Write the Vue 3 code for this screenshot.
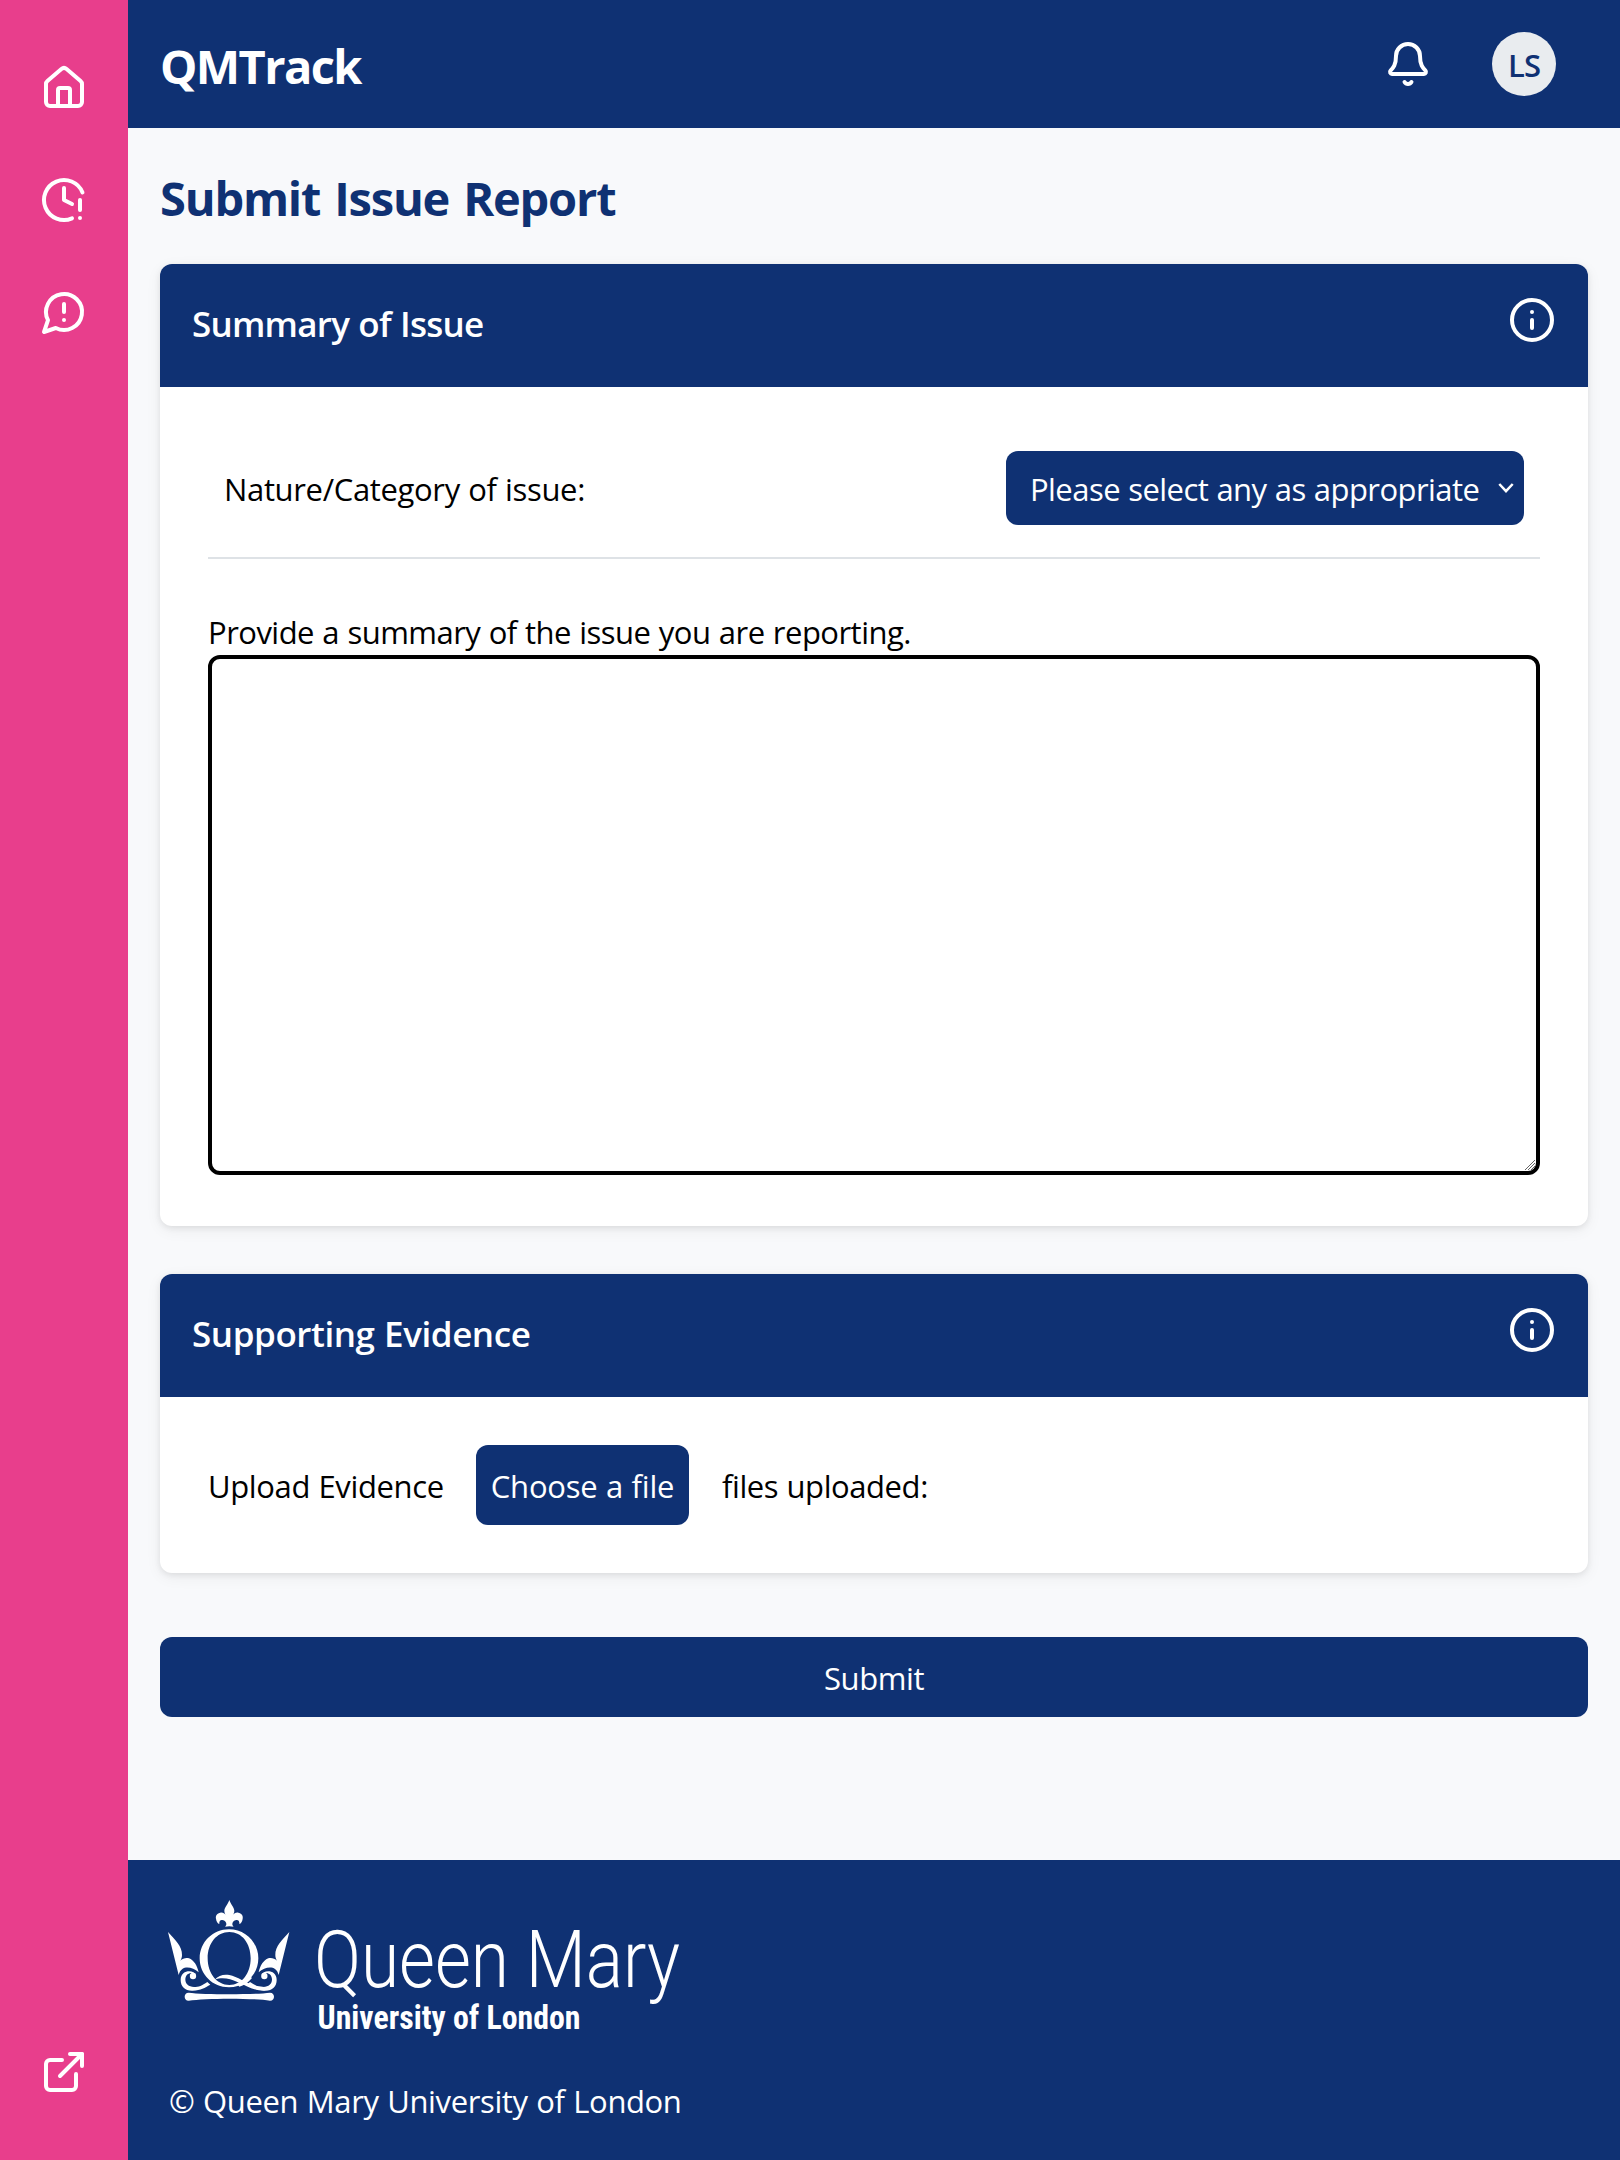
<script setup>
const navIcons = [
  {
    label: 'Home',
    paths: [
      'M15 21v-8a1 1 0 0 0-1-1h-4a1 1 0 0 0-1 1v8',
      'M3 10a2 2 0 0 1 .709-1.528l7-5.999a2 2 0 0 1 2.582 0l7 5.999A2 2 0 0 1 21 10v9a2 2 0 0 1-2 2H5a2 2 0 0 1-2-2z',
    ],
  },
  {
    label: 'Extenuating circumstances',
    paths: ['M12 6v6l4 2', 'M20 12v5', 'M20 21h.01', 'M21.25 8.2A10 10 0 1 0 16 21.16'],
  },
  {
    label: 'Report an issue',
    paths: ['M7.9 20A9 9 0 1 0 4 16.1L2 22Z', 'M12 8v4', 'M12 16h.01'],
  },
]
</script>

<template>
  <div class="app">
    <nav class="sidebar">
      <div class="nav-top">
        <a v-for="item in navIcons" :key="item.label" :aria-label="item.label">
          <svg class="icon" viewBox="0 0 24 24">
            <path v-for="d in item.paths" :key="d" :d="d" />
          </svg>
        </a>
      </div>
      <a aria-label="Open external site">
        <svg class="icon" viewBox="0 0 24 24">
          <path d="M15 3h6v6" />
          <path d="M10 14 21 3" />
          <path d="M18 13v6a2 2 0 0 1-2 2H5a2 2 0 0 1-2-2V8a2 2 0 0 1 2-2h6" />
        </svg>
      </a>
    </nav>

    <div class="page">
      <header class="topbar">
        <div class="brand">QMTrack</div>
        <div class="actions">
          <svg class="icon" viewBox="0 0 24 24">
            <path d="M10.268 21a2 2 0 0 0 3.464 0" />
            <path d="M3.262 15.326A1 1 0 0 0 4 17h16a1 1 0 0 0 .74-1.673C19.41 13.956 18 12.499 18 8A6 6 0 0 0 6 8c0 4.499-1.411 5.956-2.738 7.326" />
          </svg>
          <div class="avatar">LS</div>
        </div>
      </header>

      <main>
        <h1>Submit Issue Report</h1>

        <section class="card">
          <div class="card-head">
            <h2 class="summary-title">Summary of Issue</h2>
            <svg class="icon" viewBox="0 0 24 24">
              <circle cx="12" cy="12" r="10" />
              <path d="M12 16v-4" />
              <path d="M12 8h.01" />
            </svg>
          </div>
          <div class="summary-body">
            <div class="category-row">
              <span class="category-label">Nature/Category of issue:</span>
              <div class="select">
                <span>Please select any as appropriate</span>
                <svg class="chevron" viewBox="0 0 16 10"><path d="M1.3 1 8 8.2 14.7 1" /></svg>
              </div>
            </div>
            <label class="summary-label" for="summary">Provide a summary of the issue you are reporting.</label>
            <div class="textarea-wrap">
              <textarea id="summary"></textarea>
              <svg class="grip" viewBox="0 0 10 10"><path d="M0 10 10 0M3 10 10 3M6 10 10 6" /></svg>
            </div>
          </div>
        </section>

        <section class="card evidence">
          <div class="card-head">
            <h2 class="evidence-title">Supporting Evidence</h2>
            <svg class="icon" viewBox="0 0 24 24">
              <circle cx="12" cy="12" r="10" />
              <path d="M12 16v-4" />
              <path d="M12 8h.01" />
            </svg>
          </div>
          <div class="evidence-body">
            <span class="upload-label">Upload Evidence</span>
            <button class="choose">Choose a file</button>
            <span class="files-label">files uploaded:</span>
          </div>
        </section>

        <button class="submit">Submit</button>
      </main>

      <footer>
        <svg class="logo" viewBox="0 0 540 150" width="540" height="150">
          <g transform="scale(.333333)">
            <path d="M238 60C233 75 223 82 223 93C223 99 227 105 230 110C226 101 219 97 211 98C202 99 196 107 198 116C199 125 203 130 208 132C207 124 211 119 217 120C225 121 229 127 229 132C229 136 227 138 225 140Q238 137 251 140C249 138 247 136 247 132C247 127 251 121 259 120C265 119 269 124 268 132C273 130 277 125 278 116C280 107 274 99 265 98C257 97 250 101 246 110C249 105 253 99 253 93C253 82 243 75 238 60Z" />
            <path fill-rule="evenodd" d="M237 148C286 148 325 187 325 235C325 284 286 322 237 322C188 322 149 284 149 235C149 187 188 148 237 148ZM238 156C200 156 173 190 173 235C173 280 200 315 238 315C276 315 302 280 302 235C302 190 276 156 238 156Z" />
            <g v-for="side in ['translate(0 0)', 'translate(472 0) scale(-1 1)']" :key="side" :transform="side">
              <path d="M54 156C74 178 97 198 96 225C96 232 94 237 91 242C98 235 109 232 117 235C131 240 142 257 146 277C131 263 109 258 97 267C91 271 88 277 86 285Z" />
              <circle cx="129" cy="288" r="9.500" />
              <path d="M137 283C133 270 92 266 92 300C92 320 106 333 128 332C153 331 164 323 181 314L172 306C156 317 146 321 132 321C116 321 106 312 106 298C106 279 126 274 137 283Z" />
            </g>
            <path d="M194 299C206 287 219 282 238 285C268 290 300 321 343 321L344 332C309 332 290 317 262 306C241 297 219 290 194 299Z" />
            <path d="M262 313C276 306 287 297 296 285L306 294C294 309 281 317 268 320Z" />
            <path d="M116 338C160 344 316 344 360 338C376 338 376 362 360 362C310 354 166 354 116 362C100 362 100 338 116 338Z" />
          </g>
          <text class="logo-name" x="164" y="107" textLength="366" lengthAdjust="spacingAndGlyphs">Queen Mary</text>
          <text class="logo-sub" x="167.500" y="149" textLength="263" lengthAdjust="spacingAndGlyphs">University of London</text>
        </svg>
        <p>© Queen Mary University of London</p>
      </footer>
    </div>
  </div>
</template>

<style>
body {
  background: #f8f9fb;
}
</style>

<style scoped>
* {
  box-sizing: border-box;
  margin: 0;
}

.app {
  --navy: #0f3173;
  display: flex;
  height: 2160px;
  font: 31px/44px 'Open Sans', 'Noto Sans', sans-serif;
  color: #000;
  background: #f8f9fb;
}

.icon {
  display: block;
  width: 48px;
  height: 48px;
  flex: none;
  fill: none;
  stroke: #fff;
  stroke-width: 2;
  stroke-linecap: round;
  stroke-linejoin: round;
}

.sidebar {
  width: 128px;
  flex: none;
  display: flex;
  flex-direction: column;
  justify-content: space-between;
  align-items: center;
  padding: 64px 0;
  background: #e83e8c;
}

.nav-top {
  display: flex;
  flex-direction: column;
  gap: 64px;
}

.page {
  flex: 1;
  display: flex;
  flex-direction: column;
}

.topbar {
  height: 128px;
  flex: none;
  display: flex;
  align-items: center;
  justify-content: space-between;
  padding: 0 64px 0 32px;
  background: var(--navy);
  color: #fff;
}

.brand {
  padding-top: 4px;
  font-size: 47px;
  font-weight: 700;
  line-height: 64px;
  letter-spacing: -1.6px;
}

.actions {
  display: flex;
  align-items: center;
  gap: 60px;
}

.avatar {
  width: 64px;
  height: 64px;
  border-radius: 50%;
  background: #e9ecef;
  color: var(--navy);
  font-weight: 600;
  line-height: 66px;
  letter-spacing: -1px;
  text-align: center;
}

main {
  flex: 1;
  padding: 32px 32px 0;
}

h1 {
  margin: 0 0 28px;
  color: var(--navy);
  font-size: 47px;
  font-weight: 700;
  line-height: 76px;
  letter-spacing: -1.2px;
  word-spacing: 3px;
}

.card {
  background: #fff;
  border-radius: 12px;
  box-shadow: 0 2px 6px rgba(0, 0, 0, 0.08), 0 4px 16px rgba(0, 0, 0, 0.06);
}

.card-head {
  height: 123px;
  display: flex;
  justify-content: space-between;
  padding: 32px;
  border-radius: 12px 12px 0 0;
  background: var(--navy);
  color: #fff;
}

h2 {
  font-size: 35px;
  font-weight: 600;
  line-height: 56px;
}

.summary-title {
  letter-spacing: -0.75px;
  word-spacing: 0.8px;
}

.evidence-title {
  letter-spacing: -0.42px;
  word-spacing: 0.8px;
}

.summary-body {
  height: 839px;
  padding: 48px;
}

.category-row {
  height: 124px;
  display: flex;
  align-items: center;
  justify-content: space-between;
  padding: 16px 16px 32px;
  border-bottom: 2px solid #dee2e6;
}

.category-label {
  padding-top: 1px;
  letter-spacing: -0.34px;
  word-spacing: 0.7px;
}

.select {
  width: 518px;
  height: 74px;
  display: flex;
  align-items: center;
  justify-content: space-between;
  padding: 2px 10px 0 24px;
  border-radius: 12px;
  background: var(--navy);
  color: #fff;
  letter-spacing: -0.55px;
  word-spacing: 0.7px;
}

.chevron {
  width: 16px;
  height: 10px;
  margin-top: -2px;
  fill: none;
  stroke: #fff;
  stroke-width: 2.5;
}

.summary-label {
  display: block;
  margin: 51px 0 1px;
  letter-spacing: -0.52px;
  word-spacing: 0.8px;
}

.textarea-wrap {
  position: relative;
}

textarea {
  display: block;
  width: 100%;
  height: 520px;
  border: 4px solid #000;
  border-radius: 12px;
  background: #fff;
  outline: none;
  resize: none;
}

.grip {
  position: absolute;
  right: 5px;
  bottom: 5px;
  width: 10px;
  height: 10px;
  fill: none;
  stroke: #555;
  stroke-width: 0.9;
}

.evidence {
  margin-top: 48px;
}

.evidence-body {
  display: flex;
  align-items: center;
  padding: 48px;
}

.upload-label {
  width: 268px;
  padding-top: 2px;
  letter-spacing: -0.36px;
  word-spacing: 0.7px;
}

button {
  border: 0;
  border-radius: 12px;
  background: var(--navy);
  color: #fff;
  font: inherit;
}

.choose {
  width: 213px;
  height: 80px;
  padding: 2px 0 0;
  letter-spacing: -0.22px;
  word-spacing: 0.7px;
}

.files-label {
  margin-left: 33px;
  padding-top: 2px;
  letter-spacing: -0.42px;
  word-spacing: 0.7px;
}

.submit {
  display: block;
  width: 100%;
  height: 80px;
  margin-top: 64px;
  padding: 1px 0 0;
  letter-spacing: -0.4px;
}

footer {
  height: 300px;
  flex: none;
  padding: 20px 22px 0;
  background: var(--navy);
  color: #fff;
}

.logo {
  display: block;
  fill: #fff;
  overflow: visible;
}

.logo-name {
  font: 300 80px Roboto, sans-serif;
}

.logo-sub {
  font: 700 34px 'Roboto Condensed', Roboto, sans-serif;
}

footer p {
  margin: 49px 0 0 19px;
  letter-spacing: -0.38px;
  word-spacing: 1px;
}
</style>
